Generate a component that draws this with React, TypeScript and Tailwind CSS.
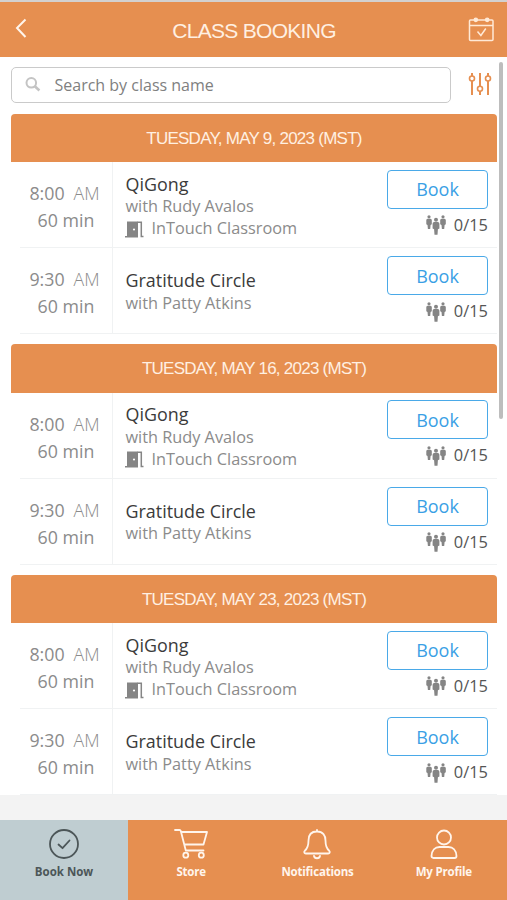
import type { ReactNode } from 'react';

const SANS = "font-['Open_Sans','Noto_Sans',sans-serif]";
const HELV = "font-['Liberation_Sans',Arial,sans-serif]";

interface ClassItem {
  time: string;
  name: string;
  teacher: string;
  room?: string;
}

const classes: ClassItem[] = [
  { time: '8:00', name: 'QiGong', teacher: 'with Rudy Avalos', room: 'InTouch Classroom' },
  { time: '9:30', name: 'Gratitude Circle', teacher: 'with Patty Atkins' },
];

const days = [
  'TUESDAY, MAY 9, 2023 (MST)',
  'TUESDAY, MAY 16, 2023 (MST)',
  'TUESDAY, MAY 23, 2023 (MST)',
];

function DoorIcon() {
  return (
    <svg className="mt-[1px] mr-[7.5px] -ml-[0.5px] h-[17px] w-[19px] shrink-0" viewBox="0 0 19 17">
      <path d="M2 .5h11v16H0V15h2z" fill="#858585" />
      <path d="M12.500 1.300h3.800V15.500h2.200" fill="none" stroke="#858585" strokeWidth="1.5" />
      <circle cx="9" cy="8.500" r="1.100" fill="#fff" />
    </svg>
  );
}

function PeopleIcon() {
  return (
    <svg className="mr-[8px] h-[20px] w-[20px] shrink-0" viewBox="0 0 20 20" fill="#858585">
      <circle cx="3" cy="1.800" r="1.600" />
      <path d="M1.500 3.800h3q1.300.2 1.300 1.500v4l-1.200.6-.4 4.100H1.900L1.500 9.900.3 9.300v-4q0-1.300 1.200-1.500z" />
      <circle cx="17" cy="1.800" r="1.600" />
      <path d="M15.500 3.800h3q1.300.2 1.300 1.500v4l-1.200.6-.4 4.100h-2.300l-.4-4.100-1.300-.6v-4q0-1.300 1.300-1.500z" />
      <circle cx="10" cy="4.700" r="2" />
      <path d="M8.200 7.100h3.600q1.600.2 1.600 1.700v4.700l-1.500.7-.4 5.600h-3l-.4-5.600-1.500-.7V8.800q0-1.500 1.600-1.700z" />
    </svg>
  );
}

function ClassRow({ item }: { item: ClassItem }) {
  return (
    <div className="flex h-[86px]">
      <div className="ml-[9px] w-[93px] shrink-0 border-r border-b border-[#f0f2f3] pt-[18.3px] pr-[3px] text-center text-[17.8px] leading-[26.7px] text-[#8b8b8b]">
        <div className="whitespace-nowrap">
          {item.time}
          <span className="ml-[9px] font-light">AM</span>
        </div>
        <div className="pl-[3px]">60 min</div>
      </div>
      <div
        className={`flex min-w-0 grow flex-col border-b border-[#f0f2f3] pl-[12.5px] text-[16.3px] leading-[22.3px] whitespace-nowrap text-[#8b8b8b] ${item.room ? 'pt-[10.8px]' : 'pt-[21.3px]'}`}
      >
        <div className="text-[17.9px] text-[#3b3b3b]">{item.name}</div>
        <div>{item.teacher}</div>
        {item.room && (
          <div className="flex items-center">
            <DoorIcon />
            <span>{item.room}</span>
          </div>
        )}
      </div>
      <div
        className={`flex w-[110px] shrink-0 flex-col items-end border-b border-[#f0f2f3] pr-[9px] ${item.room ? 'pt-[7.5px]' : 'pt-[8px]'}`}
      >
        <button className="h-[39px] w-[101px] rounded-[4px] border border-[#4aa9e8] pt-[1px] text-[18px] text-[#3a9fe5]">
          Book
        </button>
        <div className="mt-[5.5px] flex h-[22px] items-center text-[16.4px] text-[#555]">
          <PeopleIcon />
          <span>0/15</span>
        </div>
      </div>
    </div>
  );
}

function Tab({ label, children, active }: { label: string; children: ReactNode; active?: boolean }) {
  return (
    <div
      className={`flex flex-col items-center pt-[8px] text-[11.5px] font-bold ${active ? 'w-[128px] bg-[#bfcdd1] text-[#4c5658]' : 'flex-1 tracking-[-0.2px] text-[#fff5ec]'}`}
    >
      <svg
        className="h-[34px] w-[36px]"
        viewBox="0 0 36 34"
        fill="none"
        stroke="currentColor"
        strokeWidth="1.8"
        strokeLinecap="round"
        strokeLinejoin="round"
      >
        {children}
      </svg>
      <span className="mt-[1px] leading-[18px] whitespace-nowrap">{label}</span>
    </div>
  );
}

export default function App() {
  return (
    <div className={`flex h-[900px] w-[507px] flex-col overflow-hidden bg-white ${SANS}`}>
      <header className="flex h-[57px] shrink-0 items-center justify-between border-t-[2px] border-[#d3d1d0] bg-[#e68f50] pr-[12px] pl-[14px]">
        <svg className="mb-[3px] h-[22px] w-[14px]" viewBox="0 0 14 22" fill="none" stroke="#fff5ec" strokeWidth="2">
          <path d="M11.5 2.5 3 11l8.5 9" />
        </svg>
        <h1 className={`mt-[2px] ml-[12px] text-[21px] tracking-[-0.7px] text-[#fff0e2] ${HELV}`}>CLASS BOOKING</h1>
        <svg className="h-[27px] w-[27px]" viewBox="0 0 27 27" fill="none" stroke="#ffe9d6" strokeWidth="1.5">
          <rect x="1.5" y="4" width="23.5" height="20.5" rx="1" />
          <path d="M1.5 9.5h23.5M9.500 15.500l3.400 4 4.900-7" />
          <circle cx="7.800" cy="3.800" r="1.600" fill="#ffe9d6" />
          <circle cx="19.200" cy="3.800" r="1.600" fill="#ffe9d6" />
        </svg>
      </header>

      <main className="flex h-[763px] shrink-0 overflow-hidden">
        <div className="flex w-[497px] shrink-0 flex-col pl-[11px]">
          <div className="mt-[10px] flex h-[36px] shrink-0 items-center">
            <div className="flex h-[36px] w-[440px] items-center rounded-[5px] border border-[#cacaca] pl-[13px] text-[16px] text-[#808080]">
              <svg className="mr-[13.5px] h-[16px] w-[16px]" viewBox="0 0 16 16" fill="none" stroke="#c4c4c4" strokeWidth="2">
                <circle cx="6.3" cy="5.8" r="4.8" />
                <path d="m9.8 9.3 4.6 4.2" strokeWidth="2.6" />
              </svg>
              Search by class name
            </div>
            <svg className="mb-[2px] ml-[17px] h-[24px] w-[24px] shrink-0" viewBox="0 0 24 24" fill="none" stroke="#e68f50" strokeWidth="2">
              <path d="M4 1v3M4 9v14M12 1v13M12 19v4M20 1v3M20 9v14" />
              <circle cx="4" cy="6.5" r="2.5" strokeWidth="1.6" />
              <circle cx="12" cy="16.7" r="2.5" strokeWidth="1.6" />
              <circle cx="20" cy="6.5" r="2.5" strokeWidth="1.6" />
            </svg>
          </div>
          <div className="mt-[10.5px] flex flex-col gap-[10px]">
            {days.map((day) => (
              <section key={day}>
                <h2
                  className={`flex h-[48.5px] items-center justify-center rounded-t-[4px] bg-[#e68f50] pt-[1.5px] text-[17px] tracking-[-0.75px] text-[#fff0e2] ${HELV}`}
                >
                  {day}
                </h2>
                {classes.map((item) => (
                  <ClassRow key={item.name} item={item} />
                ))}
              </section>
            ))}
          </div>
          <div className="-ml-[11px] h-[30px] w-[507px] shrink-0 bg-[#f3f3f3]" />
        </div>
        <div className="mt-[5px] ml-[1.5px] h-[357px] w-[4px] shrink-0 rounded-[2px] bg-[#bdbdbd]" />
      </main>

      <nav className="flex h-[81px] shrink-0 bg-[#e68f50]">
        <Tab label="Book Now" active>
          <circle cx="18" cy="16" r="14" />
          <path d="m12.5 16.5 4 3.7 7-7.7" />
        </Tab>
        <Tab label="Store">
          <path d="M2 2h4.5q1 0 1.3 1l5 19.5h17.7M8.5 4H34l-3.5 12.5H11.500" />
          <circle cx="12.8" cy="27.2" r="2.5" />
          <circle cx="28.3" cy="27.2" r="2.5" />
        </Tab>
        <Tab label="Notifications">
          <path d="M18 2v1.5M18 3.5c-6 0-8.5 4-8.5 9 0 6-1 8-3.7 10.3-1.1 1.2-.5 2.7 1 2.7h22.4c1.5 0 2.1-1.5 1-2.7-2.7-2.3-3.7-4.3-3.7-10.3 0-5-2.5-9-8.5-9zM15 28c.5 3 5.5 3 6 0" />
        </Tab>
        <Tab label="My Profile">
          <circle cx="18" cy="9.5" r="7" />
          <path d="M7.5 30c-1.3 0-2-.7-2-2 .3-5.5 3.5-9 8-9h9c4.5 0 7.7 3.5 8 9 0 1.3-.7 2-2 2z" />
        </Tab>
      </nav>
    </div>
  );
}
